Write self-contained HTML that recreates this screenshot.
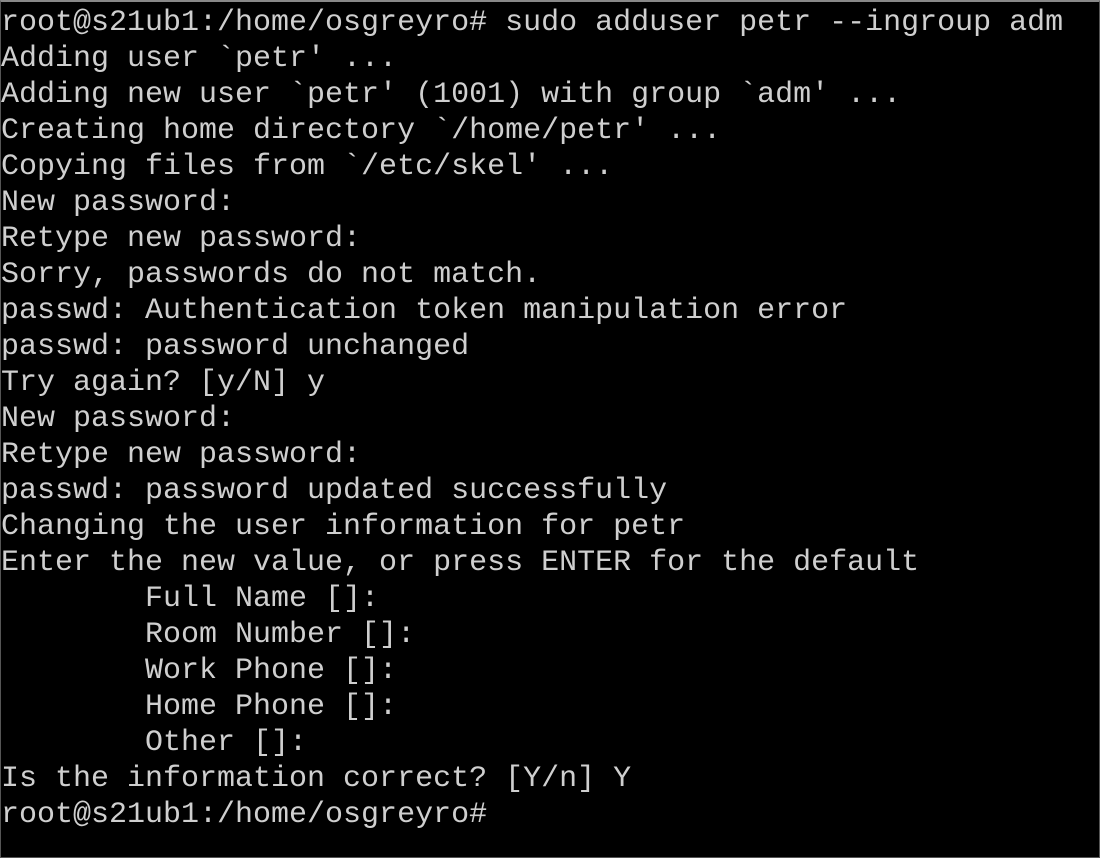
<!DOCTYPE html>
<html><head><style>
html,body{margin:0;padding:0;background:#000;}
body{width:1100px;height:858px;overflow:hidden;position:relative;border-top:2px solid #888;box-sizing:border-box;border-left:1px solid #555;border-right:1px solid #555;border-bottom:1px solid #555;}
pre{margin:0;position:absolute;left:0;top:3px;font-family:"Liberation Mono",monospace;font-size:30px;line-height:36px;color:#cfcfcf;}
</style></head><body><pre>root@s21ub1:/home/osgreyro# sudo adduser petr --ingroup adm
Adding user `petr' ...
Adding new user `petr' (1001) with group `adm' ...
Creating home directory `/home/petr' ...
Copying files from `/etc/skel' ...
New password:
Retype new password:
Sorry, passwords do not match.
passwd: Authentication token manipulation error
passwd: password unchanged
Try again? [y/N] y
New password:
Retype new password:
passwd: password updated successfully
Changing the user information for petr
Enter the new value, or press ENTER for the default
        Full Name []:
        Room Number []:
        Work Phone []:
        Home Phone []:
        Other []:
Is the information correct? [Y/n] Y
root@s21ub1:/home/osgreyro#</pre></body></html>
